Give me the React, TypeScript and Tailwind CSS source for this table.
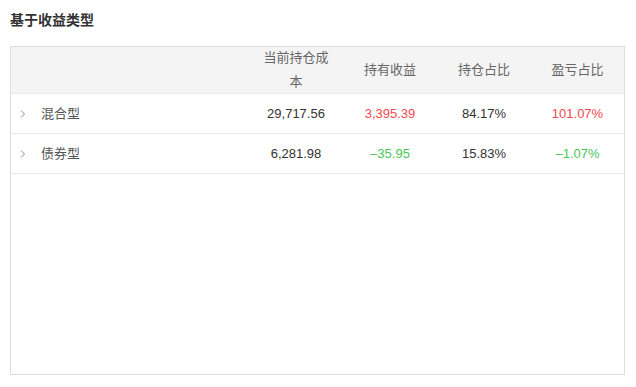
import React from 'react';

interface Row {
  name: string;
  cost: string;
  profit: string;
  share: string;
  pnlShare: string;
  up: boolean;
}

const rows: Row[] = [
  { name: '混合型', cost: '29,717.56', profit: '3,395.39', share: '84.17%', pnlShare: '101.07%', up: true },
  { name: '债券型', cost: '6,281.98', profit: '–35.95', share: '15.83%', pnlShare: '–1.07%', up: false },
];

const Chevron = () => (
  <svg width="6" height="10" viewBox="0 0 6 10" className="shrink-0">
    <path d="M1 1.5 L4.5 5 L1 8.5" fill="none" stroke="#8c8c8c" strokeWidth="1" />
  </svg>
);

export default function App() {
  return (
    <div
      className="w-[636px] h-[387px] bg-white px-[10px] pt-[10px] text-[#333]"
      style={{ fontFamily: '"Liberation Sans", "Noto Sans CJK SC", sans-serif' }}
    >
      <h2 className="text-[14px] font-bold leading-[20px] text-[#333]">基于收益类型</h2>

      <div className="mt-[16px] w-[615px] h-[329px] border border-[#dedede] text-[13px]">
        {/* header */}
        <div className="flex h-[47px] bg-[#f4f4f4] border-b border-[#ebebeb] text-[#666]">
          <div className="flex-1" />
          <div className="w-[94px] px-[14px] flex items-center justify-center text-center leading-[24px]">
            当前持仓成本
          </div>
          <div className="w-[94px] flex items-center justify-center">持有收益</div>
          <div className="w-[94px] flex items-center justify-center">持仓占比</div>
          <div className="w-[93px] flex items-center justify-center">盈亏占比</div>
        </div>

        {rows.map((r) => (
          <div key={r.name} className="flex h-[40px] border-b border-[#ebebeb] items-center">
            <div className="flex-1 flex items-center pl-[9px] gap-[15px] text-[#555]">
              <Chevron />
              <span>{r.name}</span>
            </div>
            <div className="w-[94px] text-center">{r.cost}</div>
            <div className={`w-[94px] text-center ${r.up ? 'text-[#f2484f]' : 'text-[#4cc35a]'}`}>{r.profit}</div>
            <div className="w-[94px] text-center">{r.share}</div>
            <div className={`w-[93px] text-center ${r.up ? 'text-[#f2484f]' : 'text-[#4cc35a]'}`}>{r.pnlShare}</div>
          </div>
        ))}
      </div>
    </div>
  );
}
